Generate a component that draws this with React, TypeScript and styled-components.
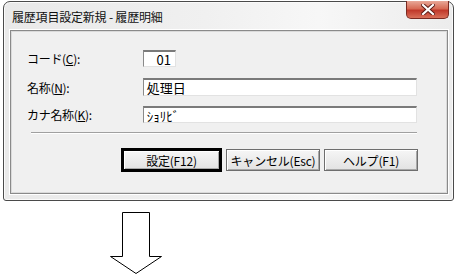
import styled, { createGlobalStyle } from "styled-components";

const GlobalStyle = createGlobalStyle`
    html, body {
        margin: 0;
        padding: 0;
        background: #ffffff;
    }

    body {
        font-family: "Noto Sans CJK JP", "Liberation Sans", sans-serif;
        font-size: 12px;
        color: #000000;
    }
`;

const Page = styled.div`
    width: 459px;
    height: 274px;
    padding: 1px 0 0 3px;
    box-sizing: border-box;
    display: flex;
    flex-direction: column;
`;

const Window = styled.div`
    width: 451px;
    height: 201px;
    box-sizing: border-box;
    border: 1px solid #4a4a4a;
    border-radius: 7px 7px 3px 3px;
    background: linear-gradient(90deg, #e9e9e9 0%, #f0f0f0 45%, #f7f7f7 70%, #ececec 100%);
    display: flex;
    flex-direction: column;
    box-shadow: inset 0 0 0 1px #fafafa;
`;

const TitleBar = styled.div`
    height: 28px;
    display: flex;
    align-items: flex-start;
    justify-content: space-between;
    padding-left: 8px;
`;

const Title = styled.div`
    margin-top: 6px;
    font-size: 12px;
    letter-spacing: -0.2px;
    color: #111111;
`;

const CloseButton = styled.div`
    width: 43px;
    height: 18px;
    margin-right: 4px;
    margin-top: -1px;
    box-sizing: border-box;
    border: 1px solid #7a2a22;
    border-top: none;
    border-radius: 0 0 5px 5px;
    background: linear-gradient(180deg, #e8a898 0%, #d76b55 45%, #c0392b 55%, #d9705a 100%);
    display: flex;
    align-items: center;
    justify-content: center;

    svg {
        display: block;
    }
`;

const Client = styled.div`
    flex: 1;
    margin: 0 5px 6px 6px;
    box-sizing: border-box;
    border: 1px solid #8a8a8a;
    box-shadow: 0 0 0 1px #ffffff, inset 0 0 0 1px #dadada;
    background: #f0f0f0;
    padding: 19px 30px 0 16px;
    display: flex;
    flex-direction: column;
`;

const Row = styled.div<{ $gap: number }>`
    display: flex;
    align-items: center;
    margin-bottom: ${(p) => p.$gap}px;
`;

const Label = styled.div`
    width: 116px;
    font-size: 12px;
    letter-spacing: -0.3px;

    u {
        text-decoration: underline;
        text-underline-offset: 1px;
    }
`;

const Field = styled.div<{ $width: number; $height: number; $align?: string }>`
    width: ${(p) => p.$width}px;
    height: ${(p) => p.$height}px;
    box-sizing: border-box;
    background: #ffffff;
    border-style: solid;
    border-width: 2px 1px 1px 1px;
    border-color: #7a7a7a #e2e2e2 #e2e2e2 #8a8a8a;
    padding: 0 4px 0 3px;
    display: flex;
    align-items: center;
    justify-content: ${(p) => p.$align ?? "flex-start"};
    font-size: 13px;
    line-height: 1;
`;

const Separator = styled.div`
    margin: 0 0 0 4px;
    height: 0;
    border-top: 1px solid #a0a0a0;
    border-bottom: 1px solid #ffffff;
`;

const ButtonRow = styled.div`
    display: flex;
    justify-content: flex-end;
    gap: 4px;
    margin-top: 14px;
    margin-right: -1px;
`;

const Button = styled.div<{ $default?: boolean }>`
    width: ${(p) => (p.$default ? 101 : 94)}px;
    height: ${(p) => (p.$default ? 24 : 22)}px;
    margin-top: ${(p) => (p.$default ? 0 : 1)}px;
    box-sizing: border-box;
    border: ${(p) => (p.$default ? "3px solid #000000" : "1px solid #6e6e6e")};
    background: linear-gradient(180deg, #f6f6f6 0%, #ececec 50%, #e2e2e2 100%);
    box-shadow: inset 1px 1px 0 #ffffff, inset -1px -1px 0 #a8a8a8;
    display: flex;
    align-items: center;
    justify-content: center;
    font-size: 12px;
    letter-spacing: -0.2px;
`;

const ArrowBox = styled.div`
    margin: 11px 0 0 103px;

    svg {
        display: block;
    }
`;

export default function App() {
    return (
        <>
            <GlobalStyle />
            <Page>
                <Window>
                    <TitleBar>
                        <Title>履歴項目設定新規 - 履歴明細</Title>
                        <CloseButton>
                            <svg width="14" height="11" viewBox="0 0 14 11">
                                <path
                                    d="M2 1 L12 10 M12 1 L2 10"
                                    stroke="#5a1a14"
                                    strokeWidth="4"
                                    strokeLinecap="square"
                                />
                                <path
                                    d="M2 1 L12 10 M12 1 L2 10"
                                    stroke="#ffffff"
                                    strokeWidth="2.2"
                                    strokeLinecap="square"
                                />
                            </svg>
                        </CloseButton>
                    </TitleBar>

                    <Client>
                        <Row $gap={11}>
                            <Label>コード(<u>C</u>):</Label>
                            <Field $width={33} $height={17} $align="flex-end">01</Field>
                        </Row>
                        <Row $gap={10}>
                            <Label>名称(<u>N</u>):</Label>
                            <Field $width={275} $height={18}>処理日</Field>
                        </Row>
                        <Row $gap={9}>
                            <Label>カナ名称(<u>K</u>):</Label>
                            <Field $width={275} $height={17}>ｼｮﾘﾋﾞ</Field>
                        </Row>
                        <Separator />
                        <ButtonRow>
                            <Button $default>設定(F12)</Button>
                            <Button>キャンセル(Esc)</Button>
                            <Button>ヘルプ(F1)</Button>
                        </ButtonRow>
                    </Client>
                </Window>

                <ArrowBox>
                    <svg width="58" height="62" viewBox="0 0 58 62">
                        <path
                            d="M16.5 0.5 L43.5 0.5 L43.5 44.5 L55.5 44.5 L30 61.5 L4.5 44.5 L16.5 44.5 Z"
                            fill="#ffffff"
                            stroke="#000000"
                            strokeWidth="1"
                        />
                    </svg>
                </ArrowBox>
            </Page>
        </>
    );
}
